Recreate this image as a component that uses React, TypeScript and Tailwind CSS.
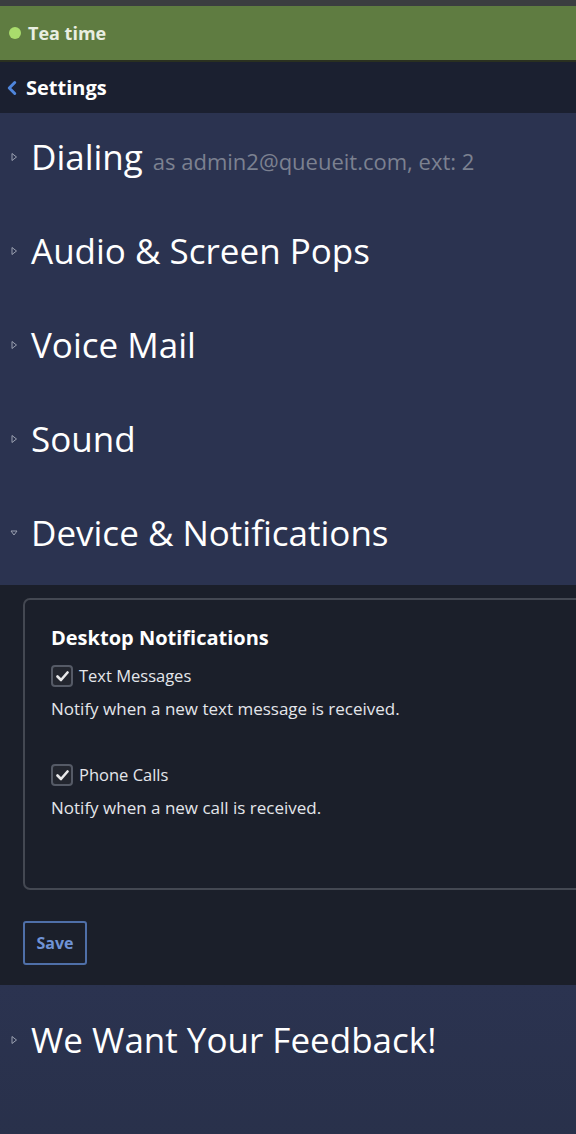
import { ChevronLeft } from 'lucide-react';

const SECTIONS = [
    { title: "Dialing", sub: "as admin2@queueit.com, ext: 2" },
    { title: "Audio & Screen Pops" },
    { title: "Voice Mail" },
    { title: "Sound" },
];

const FONT = { fontFamily: '"Open Sans", "DejaVu Sans", sans-serif' };

function Caret({ open }: { open?: boolean }) {
    return (
        <svg width="8" height="10" viewBox="0 0 8 10" className="shrink-0">
            {open ? (
                <path d="M1 3 L7 3 L4 7 Z" fill="none" stroke="#9aa0b0" strokeWidth="1" />
            ) : (
                <path d="M2 1.5 L6.5 5 L2 8.5 Z" fill="none" stroke="#9aa0b0" strokeWidth="1" />
            )}
        </svg>
    );
}

function Check({ label, desc }: { label: string; desc: string }) {
    return (
        <div>
            <div className="flex items-center gap-[6px] h-[24px]">
                <span className="w-[22px] h-[22px] rounded-[4px] border-2 border-[#555a66] bg-[#23262f] flex items-center justify-center">
                    <svg width="13" height="11" viewBox="0 0 13 11">
                        <path d="M1.5 5.5 L5 9 L11.5 1.5" fill="none" stroke="#e8e8ea" strokeWidth="2.6" strokeLinecap="round" strokeLinejoin="round" />
                    </svg>
                </span>
                <span className="text-[16.5px] text-[#e4e6ea]">{label}</span>
            </div>
            <p className="text-[17px] leading-[24px] text-[#e4e6ea] mt-[9px] whitespace-nowrap">{desc}</p>
        </div>
    );
}

export default function App() {
    return (
        <div className="w-[576px] h-[1134px] overflow-hidden bg-[#2b3350]" style={FONT}>
            <div className="h-[6px] bg-[#3b3d40]" />
            <div className="h-[56px] bg-[#5f7c41] flex items-center pl-[9px] gap-[7px] border-b-2 border-[#2a3020]">
                <span className="w-[12px] h-[12px] rounded-full bg-[#a9dc6c]" />
                <span className="text-[18px] font-bold text-[#e9eee2]">Tea time</span>
            </div>
            <div className="h-[51px] bg-[#1b2030] flex items-center pl-[1px] gap-[3px]">
                <ChevronLeft size={22} strokeWidth={3.2} color="#4f86dc" />
                <span className="text-[20px] font-bold text-white">Settings</span>
            </div>

            <div className="bg-[#2b3350]">
                {SECTIONS.map((s, idx) => (
                    <div key={idx} className="h-[94px] flex items-start pt-[18px] pl-[10px] gap-[13px]">
                        <div className="h-[52px] flex items-center">
                            <Caret />
                        </div>
                        <div className="flex items-baseline gap-[10px] whitespace-nowrap">
                            <span className="text-[35px] leading-[52px] text-white">{s.title}</span>
                            {s.sub && <span className="text-[22px] text-[#7c8190]">{s.sub}</span>}
                        </div>
                    </div>
                ))}
                <div className="h-[96px] flex items-start pt-[18px] pl-[10px] gap-[13px]">
                    <div className="h-[52px] flex items-center">
                        <Caret open />
                    </div>
                    <span className="text-[35px] leading-[52px] text-white whitespace-nowrap">Device & Notifications</span>
                </div>
            </div>

            <div className="bg-[#1b1f2a] pt-[13px] pl-[23px] pb-[20px]">
                <div className="w-[620px] h-[292px] border-2 border-[#444852] rounded-[7px] pl-[26px] pt-[24px]">
                    <h3 className="text-[20px] leading-[28px] font-bold text-white mb-[12px]">Desktop Notifications</h3>
                    <Check label="Text Messages" desc="Notify when a new text message is received." />
                    <div className="h-[42px]" />
                    <Check label="Phone Calls" desc="Notify when a new call is received." />
                </div>
                <button className="mt-[31px] w-[64px] h-[44px] border-2 border-[#4f6fa8] rounded-[3px] text-[16px] font-bold text-[#6f93d6]">
                    Save
                </button>
            </div>

            <div className="bg-gradient-to-b from-[#2b3350] to-[#283049] h-[200px] pt-[29px]">
                <div className="h-[52px] flex items-center pl-[10px] gap-[13px]">
                    <Caret />
                    <span className="text-[35px] leading-[52px] text-white whitespace-nowrap">We Want Your Feedback!</span>
                </div>
            </div>
        </div>
    );
}
